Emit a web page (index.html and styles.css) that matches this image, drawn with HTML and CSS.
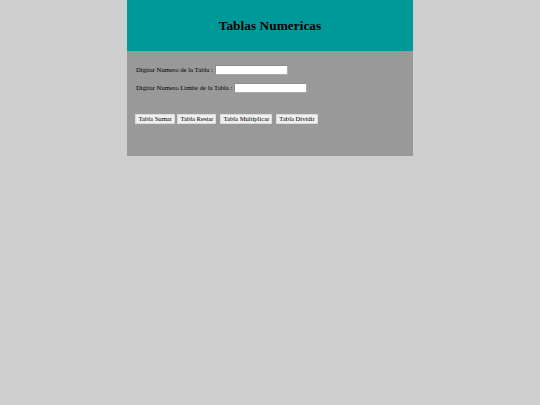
FILE: index.html
```html
<!DOCTYPE html>
<html lang="es">
<head>
<meta charset="utf-8">
<title>Tablas Numericas</title>
<link rel="stylesheet" href="styles.css">
</head>
<body>
<main class="card">
  <header class="card-head">
    <h1 class="title">Tablas Numericas</h1>
  </header>
  <section class="card-body">
    <div class="field">
      <label class="field-label" for="numero">Digitar Numero de la Tabla :</label>
      <input class="field-input" id="numero" type="text">
    </div>
    <div class="field">
      <label class="field-label" for="limite">Digitar Numero Limite de la Tabla :</label>
      <input class="field-input" id="limite" type="text">
    </div>
    <div class="actions">
      <button class="btn btn-sumar" type="button">Tabla Sumar</button>
      <button class="btn" type="button">Tabla Restar</button>
      <button class="btn" type="button">Tabla Multiplicar</button>
      <button class="btn" type="button">Tabla Dividir</button>
    </div>
  </section>
</main>
</body>
</html>
```

FILE: styles.css
```css
html, body {
  margin: 0;
  padding: 0;
}

body {
  background: #cecece;
  font-family: "Liberation Serif", "Times New Roman", serif;
  color: #000;
  min-height: 405px;
}

.card {
  width: 286px;
  margin: 0 auto;
}

.card-head {
  height: 51px;
  background: #009999;
  display: flex;
  align-items: center;
  justify-content: center;
}

.title {
  margin: 0;
  font-size: 13.4px;
  font-weight: bold;
  line-height: 1;
  padding-top: 1px;
}

.card-body {
  background: #999999;
  padding: 14px 8px 32px 9px;
  display: flex;
  flex-direction: column;
  gap: 8px;
}

.field {
  display: flex;
  align-items: center;
  gap: 2px;
  height: 10px;
}

.field-label {
  font-size: 6.7px;
  line-height: 10px;
  white-space: nowrap;
}

.field-input {
  box-sizing: border-box;
  width: 73px;
  height: 10px;
  margin: 0;
  padding: 0 2px;
  background: #fff;
  border: 1px solid #a9a9a9;
  border-top-color: #8c8c8c;
  border-left-color: #8c8c8c;
  font: inherit;
  font-size: 6.5px;
}

.actions {
  display: flex;
  gap: 4px;
  margin-top: 13px;
  margin-left: -1px;
  height: 10px;
}

.btn {
  box-sizing: border-box;
  height: 10px;
  margin: 0;
  padding: 0 2px;
  background: #efefef;
  border: 1px solid #dadada;
  font-family: inherit;
  font-size: 6.6px;
  line-height: 8px;
  color: #000;
  white-space: nowrap;
}

.btn-sumar {
  padding: 0 2.5px;
  margin-right: -2px;
}
```
